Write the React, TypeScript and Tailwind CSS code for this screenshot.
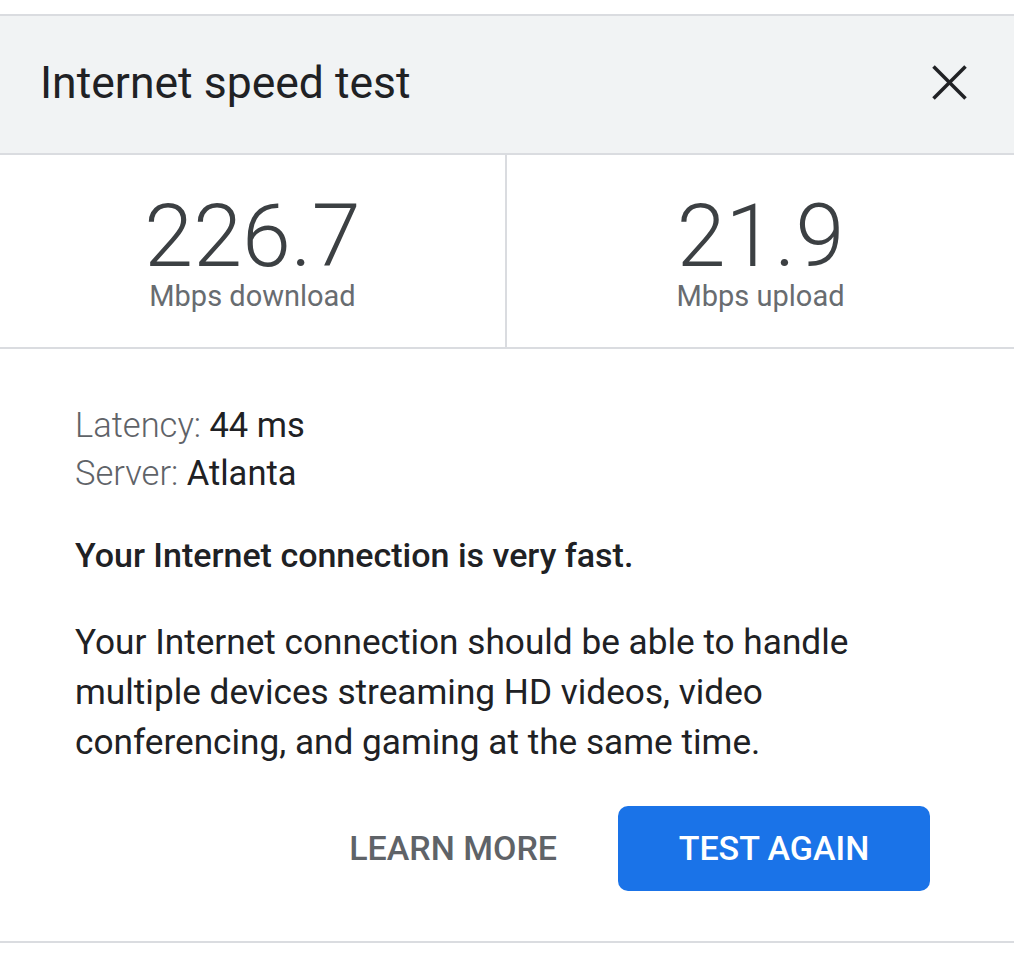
import React from "react";

export default function App() {
  return (
    <div className="w-[1014px] h-[960px] bg-white font-['Roboto',sans-serif] text-[#202124] overflow-hidden pt-[14px]">
      {/* Header */}
      <div className="h-[141px] bg-[#f1f3f4] border-t-2 border-b-2 border-[#dadce0] flex items-center justify-between pl-[40px] pr-[47px] pb-[4px]">
        <h1 className="text-[44.5px] leading-[52px] font-normal text-[#202124]">Internet speed test</h1>
        <svg width="35" height="35" viewBox="0 0 35 35" aria-label="Close">
          <line x1="1.5" y1="1.5" x2="33.5" y2="33.5" stroke="#202124" strokeWidth="3.6" />
          <line x1="33.5" y1="1.5" x2="1.5" y2="33.5" stroke="#202124" strokeWidth="3.6" />
        </svg>
      </div>

      {/* Stats */}
      <div className="h-[194px] grid grid-cols-2 border-b-2 border-[#dadce0]">
        <div className="border-r-2 border-[#dadce0] flex flex-col items-center pt-[41px]">
          <div className="text-[88px] leading-[80px] font-light text-[#3c4043]">226.7</div>
          <div className="text-[29px] leading-[34px] mt-[3px] text-[#686c70]">Mbps download</div>
        </div>
        <div className="flex flex-col items-center pt-[41px]">
          <div className="text-[88px] leading-[80px] font-light text-[#3c4043]">21.9</div>
          <div className="text-[29px] leading-[34px] mt-[3px] text-[#686c70]">Mbps upload</div>
        </div>
      </div>

      {/* Body */}
      <div className="h-[594px] border-b-2 border-[#dadce0] pl-[75px] pt-[52px]">
        <div className="text-[34.5px] leading-[48px]">
          <span className="font-light text-[#5f6368]">Latency: </span>
          <span className="text-[#202124]">44 ms</span>
        </div>
        <div className="text-[34.5px] leading-[48px]">
          <span className="font-light text-[#5f6368]">Server: </span>
          <span className="text-[#202124]">Atlanta</span>
        </div>
        <p className="mt-[34px] text-[34px] leading-[48px] font-medium text-[#202124]">
          Your Internet connection is very fast.
        </p>
        <p className="mt-[38px] text-[35.2px] leading-[50px] text-[#202124]">
          Your Internet connection should be able to handle
          <br />
          multiple devices streaming HD videos, video
          <br />
          conferencing, and gaming at the same time.
        </p>
        <div className="mt-[39px] flex items-center justify-end pr-[84px]">
          <span className="text-[34px] font-medium text-[#5f6368] mr-[61px]">LEARN MORE</span>
          <button className="w-[312px] h-[85px] rounded-[10px] bg-[#1a73e8] text-white text-[34px] font-medium flex items-center justify-center">
            TEST AGAIN
          </button>
        </div>
      </div>
    </div>
  );
}
